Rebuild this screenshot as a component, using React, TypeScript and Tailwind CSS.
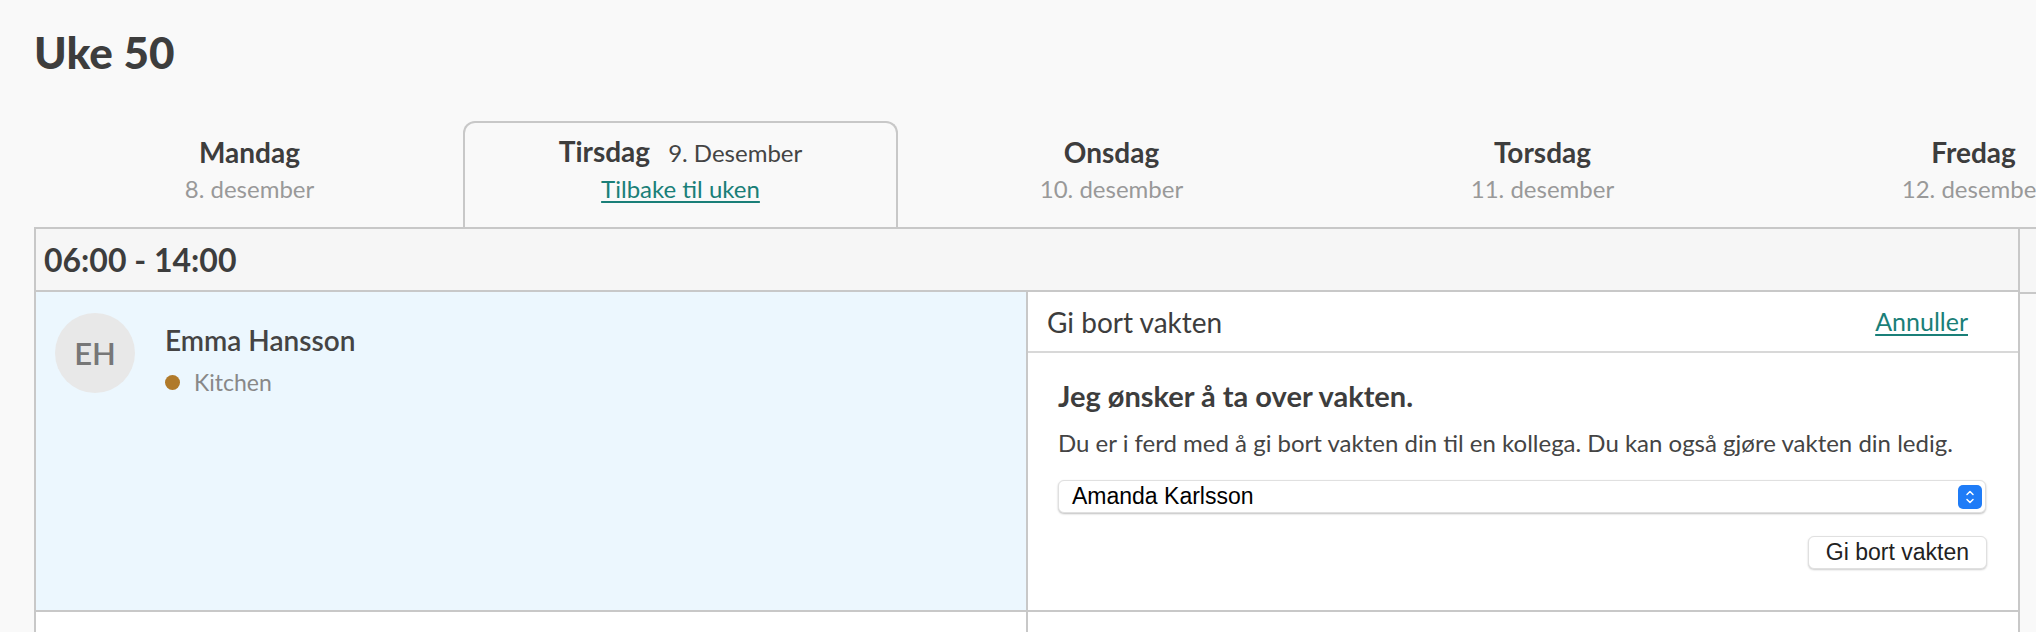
import { ChevronDown, ChevronUp } from "lucide-react";

const days = [
  { id: "man", name: "Mandag", date: "8. desember" },
  { id: "tir", name: "Tirsdag", date: "9. Desember", active: true },
  { id: "ons", name: "Onsdag", date: "10. desember" },
  { id: "tor", name: "Torsdag", date: "11. desember" },
  { id: "fre", name: "Fredag", date: "12. desember" },
];

const DayTab = ({ day }: { day: (typeof days)[number] }) => {
  if (day.active) {
    return (
      <div className="w-[431px] shrink-0 h-[106px]">
        <div className="mx-[-2px] h-full rounded-t-[12px] border-2 border-b-0 border-[#c8c8c8] bg-[#f9f9f9] flex flex-col items-center pt-[11px]">
          <div className="flex items-baseline gap-[18px] leading-[34px]">
            <span className="text-[28px] font-bold text-[#3d3d3d]">{day.name}</span>
            <span className="text-[24px] text-[#444]">{day.date}</span>
          </div>
          <a href="#" className="mt-[4px] text-[24px] leading-[30px] text-[#1a7f78] underline underline-offset-[3px]">
            Tilbake til uken
          </a>
        </div>
      </div>
    );
  }
  return (
    <div className="w-[431px] shrink-0 h-[106px] flex flex-col items-center pt-[14px]">
      <span className="text-[28px] font-bold text-[#3d3d3d] leading-[34px]">{day.name}</span>
      <span className="mt-[5px] text-[24px] text-[#999] leading-[30px] whitespace-nowrap">{day.date}</span>
    </div>
  );
};

const App = () => {
  return (
    <div className="h-[632px] w-full overflow-hidden bg-[#f9f9f9] font-['Lato',sans-serif]">
      <div className="w-[2600px] pl-[34px]">
        <h1 className="pt-[25px] text-[44px] font-black leading-[54px] text-[#3d3d3d]">Uke 50</h1>

        <div className="mt-[42px] flex">
          {days.map((day) => (
            <DayTab key={day.id} day={day} />
          ))}
        </div>

        <div className="flex border-t-2 border-[#c8c8c8]">
          <div className="w-[1986px] shrink-0 border-l-2 border-r-2 border-[#c8c8c8]">
            <div className="flex h-[63px] items-center border-b-2 border-[#c8c8c8] bg-[#f6f6f6] px-[8px]">
              <span className="text-[32px] font-bold text-[#3d3d3d]">06:00 - 14:00</span>
            </div>

            <div className="flex h-[320px] border-b-2 border-[#c8c8c8]">
              <div className="w-[992px] shrink-0 border-r-2 border-[#c8c8c8] bg-[#ecf7fe] py-[21px] pl-[19px] flex gap-[30px]">
                <div className="flex size-[80px] items-center justify-center rounded-full bg-[#e8e8e8] text-[31px] font-semibold text-[#777]">
                  EH
                </div>
                <div className="pt-[10px]">
                  <div className="text-[28px] font-semibold text-[#444] leading-[34px]">Emma Hansson</div>
                  <div className="mt-[11px] flex items-center gap-[14px] leading-[28px]">
                    <span className="size-[15px] rounded-full bg-[#b07a2a]" />
                    <span className="text-[23px] text-[#888]">Kitchen</span>
                  </div>
                </div>
              </div>

              <div className="flex-1 bg-white">
                <div className="flex h-[61px] items-center justify-between border-b-2 border-[#d8d8d8] pl-[19px] pr-[50px]">
                  <span className="text-[28px] text-[#3d3d3d]">Gi bort vakten</span>
                  <a href="#" className="text-[25px] text-[#1a7f78] underline underline-offset-[3px]">
                    Annuller
                  </a>
                </div>
                <div className="pl-[30px] pr-[32px] pt-[26px]">
                  <div className="text-[29px] font-bold text-[#3d3d3d] leading-[34px]">Jeg ønsker å ta over vakten.</div>
                  <p className="mt-[15px] text-[24px] text-[#444] leading-[30px]">
                    Du er i ferd med å gi bort vakten din til en kollega. Du kan også gjøre vakten din ledig.
                  </p>
                  <div className="mt-[22px] flex h-[33px] items-center justify-between rounded-[6px] border border-[#e0e0e0] bg-white pl-[13px] pr-[3px] shadow-[0_1px_2px_rgba(0,0,0,0.25)] font-['Liberation_Sans',sans-serif] text-[23px] text-black">
                    <span>Amanda Karlsson</span>
                    <span className="flex h-[24px] w-[24px] flex-col items-center justify-center rounded-[5px] bg-[#1f7cf7] text-white">
                      <ChevronUp className="size-[12px] -mb-[2px]" strokeWidth={3} />
                      <ChevronDown className="size-[12px] -mt-[2px]" strokeWidth={3} />
                    </span>
                  </div>
                  <div className="mt-[23px] flex justify-end">
                    <button
                      type="button"
                      className="mr-[-1px] h-[33px] rounded-[6px] border border-[#e0e0e0] bg-white px-[17px] font-['Liberation_Sans',sans-serif] text-[23px] leading-none text-[#222] shadow-[0_1px_2px_rgba(0,0,0,0.2)]"
                    >
                      Gi bort vakten
                    </button>
                  </div>
                </div>
              </div>
            </div>

            <div className="flex h-[40px]">
              <div className="w-[992px] shrink-0 border-r-2 border-[#c8c8c8] bg-white" />
              <div className="flex-1 bg-white" />
            </div>
          </div>

          <div className="w-[431px] shrink-0">
            <div className="h-[65px] border-b-2 border-[#c8c8c8] bg-[#f6f6f6]" />
          </div>
        </div>
      </div>
    </div>
  );
};

export default App;
